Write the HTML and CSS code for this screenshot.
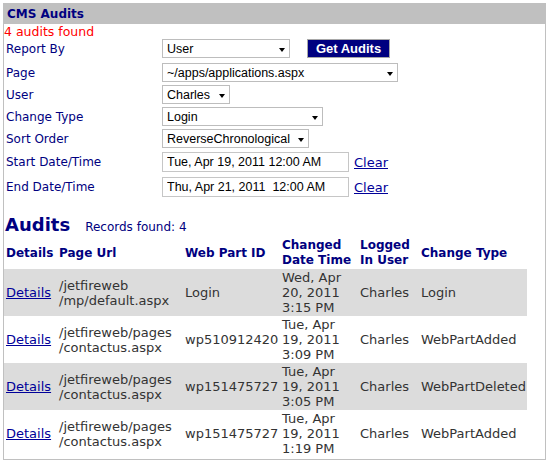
FILE: index.html
```html
<!DOCTYPE html>
<html>
<head>
<meta charset="utf-8">
<title>CMS Audits</title>
<link rel="stylesheet" href="styles.css">
</head>
<body>
<div class="panel">
  <div class="panel-head">CMS Audits</div>
  <div class="status">4 audits found</div>
  <div class="form">
    <div class="row">
      <label class="lbl">Report By</label>
      <span class="sel w-report"><select><option>User</option></select><span class="arrow"></span></span>
      <button class="btn">Get Audits</button>
    </div>
    <div class="row r-page">
      <label class="lbl">Page</label>
      <span class="sel w-page"><select><option>~/apps/applications.aspx</option></select><span class="arrow"></span></span>
    </div>
    <div class="row">
      <label class="lbl">User</label>
      <span class="sel w-user"><select><option>Charles</option></select><span class="arrow"></span></span>
    </div>
    <div class="row">
      <label class="lbl">Change Type</label>
      <span class="sel w-type"><select><option>Login</option></select><span class="arrow"></span></span>
    </div>
    <div class="row">
      <label class="lbl">Sort Order</label>
      <span class="sel w-sort"><select><option>ReverseChronological</option></select><span class="arrow"></span></span>
    </div>
    <div class="row r-start">
      <label class="lbl">Start Date/Time</label>
      <input class="date" type="text" value="Tue, Apr 19, 2011 12:00 AM">
      <a class="link clear" href="#">Clear</a>
    </div>
    <div class="row r-end">
      <label class="lbl">End Date/Time</label>
      <input class="date" type="text" value="Thu, Apr 21, 2011  12:00 AM">
      <a class="link clear" href="#">Clear</a>
    </div>
  </div>

  <div class="audits-head">
    <h2 class="audits-title">Audits</h2>
    <span class="records">Records found: 4</span>
  </div>

  <table class="grid">
    <colgroup>
      <col class="c1"><col class="c2"><col class="c3"><col class="c4"><col class="c5"><col class="c6">
    </colgroup>
    <thead>
      <tr>
        <th>Details</th>
        <th>Page Url</th>
        <th>Web Part ID</th>
        <th>Changed<br>Date Time</th>
        <th>Logged<br>In User</th>
        <th>Change Type</th>
      </tr>
    </thead>
    <tbody>
      <tr class="alt">
        <td><a class="link" href="#">Details</a></td>
        <td>/jetfireweb<br>/mp/default.aspx</td>
        <td>Login</td>
        <td>Wed, Apr<br>20, 2011<br>3:15 PM</td>
        <td>Charles</td>
        <td>Login</td>
      </tr>
      <tr>
        <td><a class="link" href="#">Details</a></td>
        <td>/jetfireweb/pages<br>/contactus.aspx</td>
        <td>wp510912420</td>
        <td>Tue, Apr<br>19, 2011<br>3:09 PM</td>
        <td>Charles</td>
        <td>WebPartAdded</td>
      </tr>
      <tr class="alt">
        <td><a class="link" href="#">Details</a></td>
        <td>/jetfireweb/pages<br>/contactus.aspx</td>
        <td>wp151475727</td>
        <td>Tue, Apr<br>19, 2011<br>3:05 PM</td>
        <td>Charles</td>
        <td>WebPartDeleted</td>
      </tr>
      <tr>
        <td><a class="link" href="#">Details</a></td>
        <td>/jetfireweb/pages<br>/contactus.aspx</td>
        <td>wp151475727</td>
        <td>Tue, Apr<br>19, 2011<br>1:19 PM</td>
        <td>Charles</td>
        <td>WebPartAdded</td>
      </tr>
    </tbody>
  </table>
</div>
</body>
</html>
```

FILE: styles.css
```css
body {
  margin: 0;
  background: #ffffff;
  font-family: "DejaVu Sans", Verdana, sans-serif;
}

.panel {
  margin: 3px 0 0 3px;
  width: 541px;
  border: 1px solid #c0c0c0;
  padding-bottom: 2px;
}

.panel-head {
  background: #c0c0c0;
  height: 20px;
  line-height: 20px;
  padding-left: 3px;
  font-size: 12px;
  font-weight: bold;
  color: #000080;
}

.status {
  height: 15px;
  line-height: 15px;
  font-size: 12.5px;
  color: #ff0000;
}

.form {
  display: flex;
  flex-direction: column;
  gap: 3px;
}

.row {
  display: flex;
  align-items: center;
  padding-left: 2px;
}

.r-page { margin-top: 2px; }
.r-start { margin-top: 1px; }
.r-end { margin-top: 2px; }

.lbl {
  flex: none;
  width: 156px;
  font-size: 12px;
  color: #000080;
}

.sel {
  display: inline-flex;
  align-items: center;
  box-sizing: border-box;
  height: 19px;
  border: 1px solid #bdbdbd;
  background: #ffffff;
}

.sel select {
  flex: 1;
  min-width: 0;
  height: 17px;
  -webkit-appearance: none;
  appearance: none;
  border: 0;
  background: transparent;
  padding: 1px 0 0 4px;
  margin: 0;
  font-family: "Liberation Sans", Arial, sans-serif;
  font-size: 12.5px;
  color: #000000;
  outline: none;
}

.arrow {
  flex: none;
  width: 0;
  height: 0;
  margin: 3px 4px 0 4px;
  border-left: 3.5px solid transparent;
  border-right: 3.5px solid transparent;
  border-top: 4px solid #000000;
}

.w-report { width: 128px; }
.w-page { width: 236px; }
.w-user { width: 68px; }
.w-type { width: 161px; }
.w-sort { width: 147px; }

.btn {
  margin-left: 17px;
  width: 83px;
  height: 19px;
  box-sizing: border-box;
  padding: 0;
  background: #000080;
  color: #ffffff;
  border: 1px solid #a8a8a8;
  font-family: "Liberation Sans", Arial, sans-serif;
  font-size: 13px;
  font-weight: bold;
}

.date {
  box-sizing: border-box;
  width: 187px;
  height: 20px;
  margin: 0;
  padding: 0 4px;
  border: 1px solid #c6c6c6;
  font-family: "Liberation Sans", Arial, sans-serif;
  font-size: 12.5px;
  color: #000000;
  white-space: pre;
}

.link {
  color: #000099;
  text-decoration: underline;
  font-size: 13px;
}

.clear {
  margin-left: 5px;
}

.audits-head {
  display: flex;
  align-items: baseline;
  margin-top: 17px;
  padding-left: 1px;
}

.audits-title {
  margin: 0;
  font-size: 18px;
  line-height: 22px;
  font-weight: bold;
  color: #000080;
}

.records {
  margin-left: 15px;
  font-size: 12px;
  color: #000080;
}

.grid {
  margin-top: 2px;
  width: 523px;
  table-layout: fixed;
  border-collapse: collapse;
  border-spacing: 0;
}

.c1 { width: 53px; }
.c2 { width: 126px; }
.c3 { width: 97px; }
.c4 { width: 78px; }
.c5 { width: 61px; }
.c6 { width: 108px; }

.grid th {
  padding: 0 2px 1px 2px;
  text-align: left;
  vertical-align: middle;
  font-size: 12px;
  line-height: 15px;
  font-weight: bold;
  color: #000080;
}

.grid td {
  padding: 1px 2px;
  vertical-align: middle;
  font-size: 13px;
  line-height: 15px;
  color: #333333;
  white-space: nowrap;
}

.grid tr.alt td {
  background: #dcdcdc;
}
```
